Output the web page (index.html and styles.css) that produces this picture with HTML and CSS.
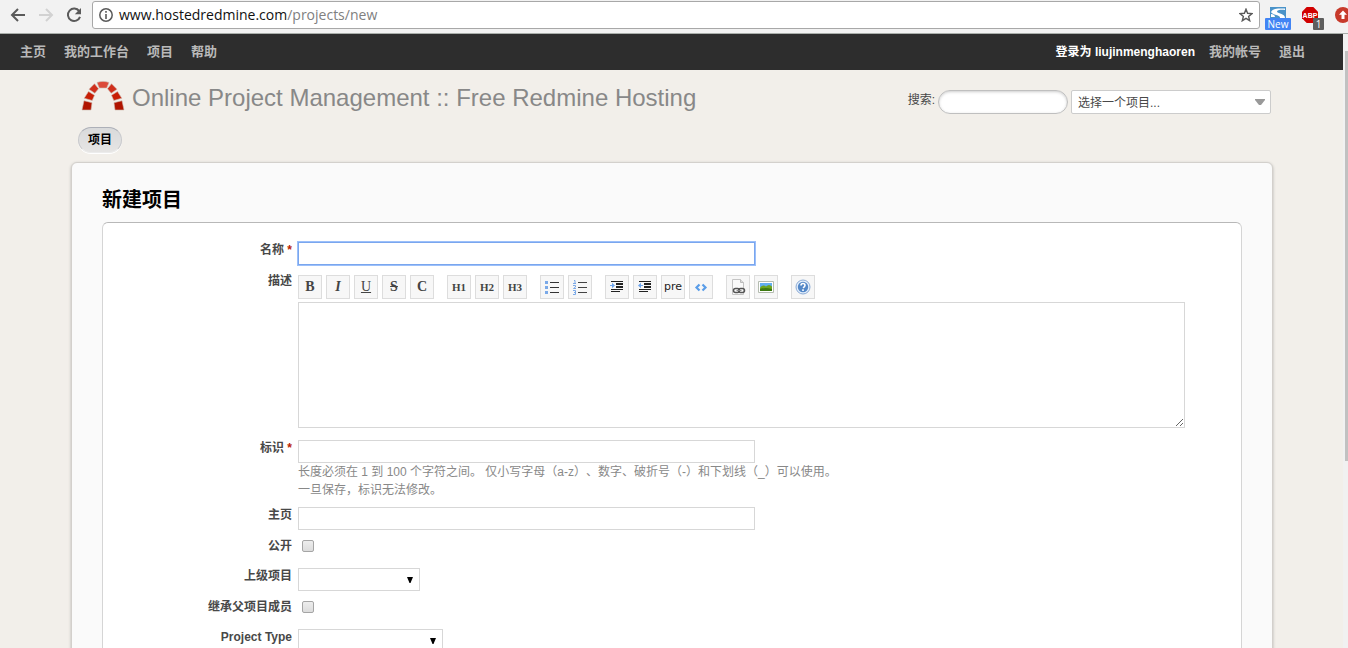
FILE: index.html
```html
<!DOCTYPE html>
<html lang="zh-CN">
<head>
<meta charset="utf-8">
<title>新建项目</title>
<link rel="stylesheet" href="styles.css">
</head>
<body>
<div class="window">
  <div class="browser-bar">
    <button class="nav-button" type="button" aria-label="后退"><svg width="16" height="16" viewBox="0 0 16 16"><path d="M15 8H2M8 2L2 8l6 6" fill="none" stroke="#5a5a5a" stroke-width="2"/></svg></button>
    <button class="nav-button" type="button" aria-label="前进" disabled><svg width="16" height="16" viewBox="0 0 16 16"><path d="M1 8h13M8 2l6 6-6 6" fill="none" stroke="#d2d2d2" stroke-width="2"/></svg></button>
    <button class="nav-button" type="button" aria-label="刷新"><svg width="16" height="16" viewBox="0 0 16 16"><path d="M13.2 4.2A6.2 6.2 0 1 0 14 9.8" fill="none" stroke="#5a5a5a" stroke-width="2"/><path d="M15 1v6.2H8.8z" fill="#5a5a5a"/></svg></button>
    <div class="address">
      <svg width="14" height="14" viewBox="0 0 14 14"><circle cx="7" cy="7" r="6.2" fill="none" stroke="#5a5a5a" stroke-width="1.5"/><path d="M6.2 6h1.6v5H6.2zM6.2 3h1.6v1.7H6.2z" fill="#5a5a5a"/></svg>
      <span class="url"><span class="host">www.hostedredmine.com</span>/projects/new</span>
      <svg width="14" height="14" viewBox="0 0 14 14"><path d="M7 1.200l1.600 4.100 4.400.3-3.400 2.800 1.100 4.300L7 10.300l-3.700 2.400 1.100-4.300L1 5.600l4.400-.3z" fill="none" stroke="#5a5a5a" stroke-width="1.400"/></svg>
    </div>
    <div class="extensions">
      <div class="extension">
        <svg width="26" height="11" viewBox="0 0 26 11"><path d="M5 0h16v11H5z" fill="#4a93c9"/><path d="M6 5C8 1 14 1.500 20 1.500V3c-4-.5-8 0-8 1.500 0 2 8 2 8 6.500h-5c1-3-8-3-9-6z" fill="#fff"/><path d="M6 7c2 0 4 1 4 3H6z" fill="#fff"/></svg>
        <span class="tag tag-new">New</span>
      </div>
      <div class="extension blocker">
        <svg width="16" height="16" viewBox="0 0 16 16"><path d="M4.700 0h6.600L16 4.700v6.600L11.300 16H4.700L0 11.300V4.700z" fill="#d10000"/><text x="8" y="10.500" text-anchor="middle" class="blocker-text">ABP</text></svg>
        <span class="tag tag-count">1</span>
      </div>
      <div class="extension">
        <svg width="16" height="16" viewBox="0 0 16 16"><circle cx="8" cy="8" r="8" fill="#c73a2b"/><path d="M8 3.500l4 4.300H9.500V12h-3V7.800H4z" fill="#fff"/></svg>
      </div>
    </div>
  </div>

  <div class="viewport">
    <div class="page">
      <nav class="top-menu">
        <a href="#">主页</a><a href="#">我的工作台</a><a href="#">项目</a><a href="#">帮助</a>
        <span class="logged">登录为 <a href="#">liujinmenghaoren</a></span>
        <a href="#">我的帐号</a><a href="#">退出</a>
      </nav>

      <div class="wrapper">
        <header class="header">
          <svg class="logo" width="44" height="32" viewBox="0 0 44 32">
            <g stroke="#cdb9ae" stroke-width=".6">
              <path d="M3 20.700l8 2L10 30H1z" fill="#b01400"/>
              <path d="M41 20.700l-8 2 1 7.300h9z" fill="#b01400"/>
              <path d="M7.500 11.500l6 3.800-2.300 5.200-8-2.300z" fill="#c81e05"/>
              <path d="M36.500 11.500l-6 3.800 2.300 5.200 8-2.300z" fill="#c81e05"/>
              <path d="M13.500 3.700l4 5-3.700 4.500L8 9.300z" fill="#d02f1c"/>
              <path d="M30.500 3.700l-4 5 3.700 4.500L36 9.300z" fill="#d02f1c"/>
              <path d="M16 2.500c4-1.500 8-1.500 12 0L25.700 8h-7.400z" fill="#dc4a3a"/>
            </g>
          </svg>
          <h1 class="site-title">Online Project Management :: Free Redmine Hosting</h1>
          <form class="quick-search">
            <label for="q">搜索:</label>
            <input class="search-input" id="q" type="text">
            <select class="project-jump" aria-label="选择一个项目"><option>选择一个项目...</option></select>
          </form>
        </header>
        <nav class="main-menu"><a href="#">项目</a></nav>

        <main class="content">
          <h2 class="heading">新建项目</h2>
          <form class="box">
            <div class="row">
              <label for="name">名称 <span class="required">*</span></label>
              <div class="field"><input class="text focused" id="name" type="text"></div>
            </div>
            <div class="row">
              <label for="description">描述</label>
              <div class="field editor">
                <div class="toolbar">
                  <div class="group">
                    <button type="button">B</button>
                    <button type="button"><i>I</i></button>
                    <button class="plain" type="button"><u>U</u></button>
                    <button type="button"><s>S</s></button>
                    <button type="button">C</button>
                  </div>
                  <div class="group headings">
                    <button type="button">H1</button>
                    <button type="button">H2</button>
                    <button type="button">H3</button>
                  </div>
                  <div class="group">
                    <button type="button" aria-label="无序列表"><svg width="16" height="16" viewBox="0 0 16 16"><path d="M1 2h3v3H1zM1 7h3v3H1zM1 12h3v3H1z" fill="#7aa9e8"/><path d="M6 3h9v1H6zM6 8h9v1H6zM6 13h9v1H6z" fill="#333"/></svg></button>
                    <button type="button" aria-label="有序列表"><svg width="16" height="16" viewBox="0 0 16 16"><path d="M2 1.500h1v3M1 4.500h3M1 6.500h2.500v1.500L1.500 9.500H4M1 11.500h2.500v4H1M2 13.500h1.500" fill="none" stroke="#7aa9e8"/><path d="M6 3h9v1H6zM6 8h9v1H6zM6 13h9v1H6z" fill="#444"/></svg></button>
                  </div>
                  <div class="group">
                    <button type="button" aria-label="引用"><svg width="16" height="16" viewBox="0 0 16 16"><path d="M2 2h12v1H2zM7 4h7v2H7zM7 7h7v2H7zM2 10h12v1H2zM2 12h9v1H2z" fill="#222"/><path d="M1 6h2V3.800L6 6.500 3 9.200V7H1z" fill="#6ea6ee"/></svg></button>
                    <button type="button" aria-label="取消引用"><svg width="16" height="16" viewBox="0 0 16 16"><path d="M2 2h12v1H2zM7 4h7v2H7zM7 7h7v2H7zM2 10h12v1H2zM2 12h9v1H2z" fill="#222"/><path d="M6 6H4V3.800L1 6.500l3 2.700V7h2z" fill="#6ea6ee"/></svg></button>
                    <button class="pre" type="button">pre</button>
                    <button type="button" aria-label="代码"><svg width="16" height="16" viewBox="0 0 16 16"><path d="M6.500 5.500l-3 3 3 3M9.500 5.500l3 3-3 3" fill="none" stroke="#5a9de8" stroke-width="2.200"/></svg></button>
                  </div>
                  <div class="group">
                    <button type="button" aria-label="链接"><svg width="16" height="16" viewBox="0 0 16 16"><path d="M2.500.5h8l3 3v12h-11z" fill="#fafafa" stroke="#c4c4c4"/><path d="M10.500.5v3h3" fill="#ddd" stroke="#bbb"/><g fill="none" stroke="#555" stroke-width="1.500"><rect x="3.500" y="9.500" width="6" height="4" rx="2"/><rect x="8.500" y="9.500" width="6" height="4" rx="2"/></g><path d="M6.500 11.500h5" stroke="#888"/></svg></button>
                    <button type="button" aria-label="图片"><svg width="16" height="16" viewBox="0 0 16 16"><path d="M.5 2.500h15v11H.5z" fill="#fff" stroke="#b4bcb0"/><path d="M2 4h12v4H2z" fill="#62aef0"/><path d="M2 8.500Q5 5 8 7.500q3-3 6 0V12H2z" fill="#6da51e"/><path d="M2 10q5-2 12 0v2H2z" fill="#3d7910"/></svg></button>
                  </div>
                  <div class="group">
                    <button type="button" aria-label="帮助"><svg width="16" height="16" viewBox="0 0 16 16"><circle cx="8" cy="8" r="7" fill="#e3eefb" stroke="#8babd6"/><circle cx="8" cy="8" r="5.200" fill="#5488c8"/><path d="M6 6.500q0-2 2-2t2 1.700Q10 7.500 8 8.800M8 10.300v1.600" fill="none" stroke="#fff" stroke-width="1.600"/></svg></button>
                  </div>
                </div>
                <textarea id="description"></textarea>
              </div>
            </div>
            <div class="row">
              <label for="identifier">标识 <span class="required">*</span></label>
              <div class="field">
                <input class="text" id="identifier" type="text">
                <p class="hint">长度必须在 1 到 100 个字符之间。 仅小写字母（a-z）、数字、破折号（-）和下划线（_）可以使用。<br>一旦保存，标识无法修改。</p>
              </div>
            </div>
            <div class="row">
              <label for="homepage">主页</label>
              <div class="field"><input class="text" id="homepage" type="text"></div>
            </div>
            <div class="row">
              <label for="public">公开</label>
              <div class="field"><input class="check" id="public" type="checkbox"></div>
            </div>
            <div class="row">
              <label for="parent">上级项目</label>
              <div class="field"><select class="choice" id="parent"><option></option></select></div>
            </div>
            <div class="row">
              <label for="inherit">继承父项目成员</label>
              <div class="field"><input class="check" id="inherit" type="checkbox"></div>
            </div>
            <div class="row">
              <label for="type">Project Type</label>
              <div class="field"><select class="choice wide" id="type"><option></option></select></div>
            </div>
          </form>
        </main>
      </div>
    </div>
    <div class="scrollbar"><div class="thumb"></div></div>
  </div>
</div>
</body>
</html>
```

FILE: styles.css
```css
* { box-sizing: border-box; }

body {
  margin: 0;
  font-family: "Liberation Sans", "Noto Sans CJK SC", sans-serif;
  font-size: 12px;
  color: #484848;
}

button, input, select, textarea { font: inherit; color: inherit; margin: 0; }
a { color: inherit; text-decoration: none; }
svg { display: block; flex: none; }

.window {
  display: flex;
  flex-direction: column;
  height: 100vh;
  overflow: hidden;
}

/* Browser bar */
.browser-bar {
  display: flex;
  flex: none;
  align-items: flex-start;
  height: 34px;
  padding: 1px 0 0 10px;
  background: #f2f2f2;
  border-bottom: 1px solid #a9aeaa;
}
.nav-button {
  display: flex;
  align-items: center;
  width: 28px;
  height: 28px;
  padding: 0;
  border: 0;
  background: none;
}
.nav-button:nth-child(3) { width: 26px; }
.address {
  display: flex;
  flex: 1;
  align-items: center;
  gap: 6px;
  height: 28px;
  padding: 0 6px;
  background: #fff;
  border: 1px solid #a8a8a8;
  border-radius: 3px;
}
.url {
  flex: 1;
  font-family: "Open Sans", "Noto Sans", sans-serif;
  font-size: 14px;
  line-height: 26px;
  color: #808080;
}
.host { color: #111; }
.extensions {
  display: flex;
  flex: none;
  gap: 11px;
  width: 88px;
  padding: 6px 0 0 5px;
}
.extension { flex: none; }
.tag {
  display: block;
  border-radius: 1px;
  font: 10px/12px "Open Sans", sans-serif;
  color: #fff;
  text-align: center;
}
.tag-new { width: 26px; background: #4285f4; }
.blocker { position: relative; width: 22px; }
.blocker-text { font: bold 7px "Liberation Sans", sans-serif; fill: #fff; }
.tag-count {
  position: absolute;
  right: 0;
  top: 11px;
  width: 11px;
  background: #5e5e5e;
}

/* Page frame */
.viewport { display: flex; flex: 1; min-height: 0; }
.page { flex: 1; overflow: hidden; background: #f2efea; }
.scrollbar {
  flex: none;
  width: 5px;
  padding: 17px 0 0 2px;
  background: #f1f1f1;
}
.thumb { height: 410px; background: #c1c1c1; }

.top-menu {
  display: flex;
  align-items: center;
  gap: 18px;
  height: 36px;
  padding: 0 38px 4px 20px;
  background: #2d2d2d;
  color: #b9b9b9;
  font-size: 13px;
  font-weight: bold;
}
.logged {
  margin: 0 -4px 0 auto;
  font-size: 12px;
  color: #fff;
}

.wrapper { padding: 0 70px 0 71px; }
.header {
  display: flex;
  align-items: center;
  height: 56px;
  padding: 0 2px 0 10px;
}
.logo { margin-right: 7px; margin-bottom: 4px; }
.site-title {
  flex: 1;
  margin: 0;
  font-size: 24px;
  font-weight: normal;
  line-height: 56px;
  color: #888;
}
.quick-search { display: flex; gap: 3px; padding-top: 8px; line-height: 20px; }
.search-input {
  width: 130px;
  height: 24px;
  padding: 0 10px;
  background: #fff;
  border: 1px solid #bfbfbf;
  border-radius: 12px;
  box-shadow: inset 0 1px 3px #ccc;
}
.project-jump {
  appearance: none;
  width: 200px;
  height: 24px;
  padding: 1px 6px 0;
  border: 1px solid #ccc;
  border-radius: 2px;
  background: url("data:image/svg+xml,%3Csvg xmlns='http://www.w3.org/2000/svg' width='10' height='6'%3E%3Cpath d='M0 0h10v1L6 6H4L0 1z' fill='%23999'/%3E%3C/svg%3E") no-repeat right 5px center #fff;
}

.main-menu { display: flex; padding: 1px 7px 9px; }
.main-menu a {
  padding: 0 9px;
  border: 1px solid #c8c9cc;
  border-top-color: #adb0b8;
  border-bottom-color: #ececec;
  border-radius: 13px;
  background: linear-gradient(#d9dadb, #e6e5e4);
  box-shadow: 0 1px 0 #fff;
  font-size: 12px;
  font-weight: bold;
  line-height: 24px;
  color: #000;
}

.content {
  padding: 21px 30px 30px;
  background: #fafafa;
  border: 1px solid #d3d0cc;
  border-radius: 6px;
  box-shadow: 0 1px 3px #b5b3b0;
}
.heading {
  margin: 0 0 6px;
  font-size: 20px;
  line-height: 32px;
  color: #000;
}

/* Form */
.box {
  display: flex;
  flex-direction: column;
  gap: 8px;
  padding: 19px 0 30px;
  background: #fff;
  border: 1px solid #d5d5d5;
  border-top-color: #b8b8b8;
  border-radius: 6px;
}
.row { display: grid; grid-template-columns: 189px 1fr; column-gap: 6px; }
.row > label { font-weight: bold; line-height: 16px; text-align: right; }
.required { color: #bb2200; }
.text {
  display: block;
  width: 457px;
  max-width: 100%;
  height: 23px;
  padding: 0 4px;
  border: 1px solid #d7d7d7;
  background: #fff;
}
.focused { border-color: #7aa6ee; outline: 1px solid #9cc0fa; }
.hint {
  margin: 0;
  line-height: 18px;
  color: #888;
  text-spacing-trim: space-all;
}
.editor { padding: 2px 0 4px; }
textarea {
  display: block;
  width: calc(100% - 56px);
  height: 126px;
  border: 1px solid #d7d7d7;
  background: #fff;
}
.toolbar { display: flex; gap: 13px; margin-bottom: 3px; }
.group { display: flex; gap: 4px; }
.group button {
  display: flex;
  align-items: center;
  justify-content: center;
  width: 24px;
  height: 24px;
  padding: 0;
  border: 1px solid #ddd;
  background: #f7f7f7;
  font: bold 14px/20px "Liberation Serif", serif;
  color: #444;
}
.headings button { font-size: 11px; }
.group .plain { font-weight: normal; }
.group .pre { font: 11px/16px "DejaVu Sans", sans-serif; color: #222; }
.check {
  appearance: none;
  display: block;
  width: 12px;
  height: 12px;
  margin: 2px 4px 8px;
  border: 1px solid #a5a5a5;
  border-radius: 2px;
  background: linear-gradient(#ededed, #dcdcdc);
}
.choice {
  appearance: none;
  display: block;
  width: 122px;
  height: 23px;
  border: 1px solid #d7d7d7;
  border-radius: 0;
  background: url("data:image/svg+xml,%3Csvg xmlns='http://www.w3.org/2000/svg' width='6' height='6'%3E%3Cpath d='M0 0h6L3.500 6h-1z' fill='%23000'/%3E%3C/svg%3E") no-repeat right 6px center #fff;
}
.wide { width: 145px; }
```
